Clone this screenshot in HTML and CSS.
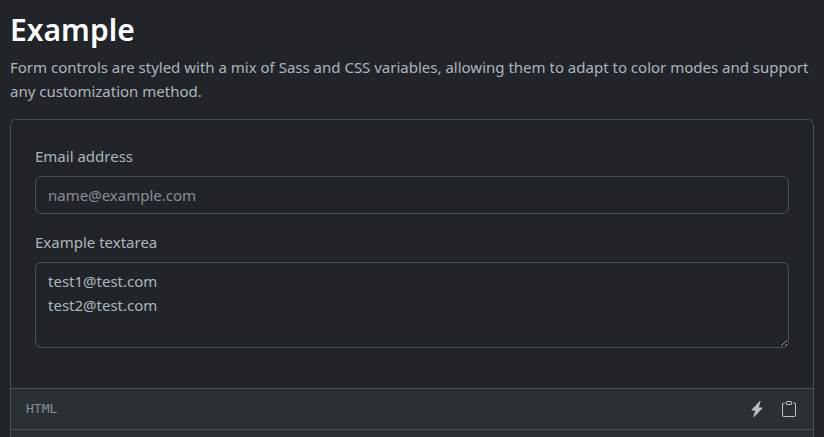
FILE: index.html
```
<!DOCTYPE html>
<html lang="en">
<head>
<meta charset="utf-8">
<title>Form controls</title>
<link rel="stylesheet" href="styles.css">
</head>
<body>
<h2>Example</h2>
<p class="lead">Form controls are styled with a mix of Sass and CSS variables, allowing them to adapt to color modes and support any customization method.</p>
<div class="snippet">
	<form class="example">
		<div class="field">
			<label for="email">Email address</label>
			<input type="email" class="control" id="email" placeholder="name@example.com">
		</div>
		<div class="field">
			<label for="message">Example textarea</label>
			<textarea class="control" id="message" rows="3">test1@test.com
test2@test.com</textarea>
		</div>
	</form>
	<div class="toolbar">
		<span class="language">html</span>
		<button type="button" class="tool" aria-label="Try it">
			<svg width="16" height="16" viewBox="0 0 16 16" fill="currentColor"><path d="M11.251.068a.5.5 0 0 1 .227.58L9.677 6.5H13a.5.5 0 0 1 .364.843l-8 8.5a.5.5 0 0 1-.842-.49L6.323 9.5H3a.5.5 0 0 1-.364-.843l8-8.5a.5.5 0 0 1 .615-.09z"/></svg>
		</button>
		<button type="button" class="tool" aria-label="Copy">
			<svg width="16" height="16" viewBox="0 0 16 16" fill="currentColor"><path d="M4 1.5H3a2 2 0 0 0-2 2V14a2 2 0 0 0 2 2h10a2 2 0 0 0 2-2V3.5a2 2 0 0 0-2-2h-1v1h1a1 1 0 0 1 1 1V14a1 1 0 0 1-1 1H3a1 1 0 0 1-1-1V3.5a1 1 0 0 1 1-1h1z"/><path d="M9.5 1a.5.5 0 0 1 .5.5v1a.5.5 0 0 1-.5.5h-3a.5.5 0 0 1-.5-.5v-1a.5.5 0 0 1 .5-.5zm-3-1A1.5 1.5 0 0 0 5 1.5v1A1.5 1.5 0 0 0 6.500 4h3A1.5 1.5 0 0 0 11 2.500v-1A1.5 1.5 0 0 0 9.5 0z"/></svg>
		</button>
	</div>
	<div class="code"></div>
</div>
</body>
</html>
```
FILE: styles.css
```
* {
	box-sizing: border-box;
}
body {
	margin: 0;
	padding: 11px 10px 0;
	background: #212529;
	color: #adb5bd;
	font-family: "Noto Sans", "Liberation Sans", sans-serif;
	font-size: 15px;
	line-height: 24px;
	color-scheme: dark;
}
h2 {
	margin: 0 0 6px;
	color: #fff;
	font-size: 30px;
	font-weight: 600;
	line-height: 38px;
}
.lead {
	margin: 0 0 16px;
}
.snippet {
	border: 1px solid #495057;
	border-bottom: 0;
	border-radius: 6px 6px 0 0;
}
.example {
	padding: 24px;
}
.field {
	margin-bottom: 16px;
}
label {
	display: block;
	margin-bottom: 8px;
}
.control {
	display: block;
	width: 100%;
	margin: 0;
	padding: 6px 12px;
	border: 1px solid #495057;
	border-radius: 6px;
	background: #212529;
	color: #adb5bd;
	font: inherit;
}
.control::placeholder {
	color: #868d94;
}
.toolbar {
	display: flex;
	align-items: center;
	gap: 16px;
	padding: 8px 15px;
	border-top: 1px solid #495057;
	border-bottom: 1px solid #495057;
	background: #2b3035;
}
.language {
	flex: 1;
	color: #868d94;
	font-family: "DejaVu Sans Mono", monospace;
	font-size: 13px;
	text-transform: uppercase;
}
.tool {
	display: flex;
	padding: 4px 0;
	border: 0;
	background: none;
	color: #bcc1c6;
}
.tool:last-child {
	margin-right: 1px;
}
.code {
	height: 24px;
	background: #2b3035;
}
```
